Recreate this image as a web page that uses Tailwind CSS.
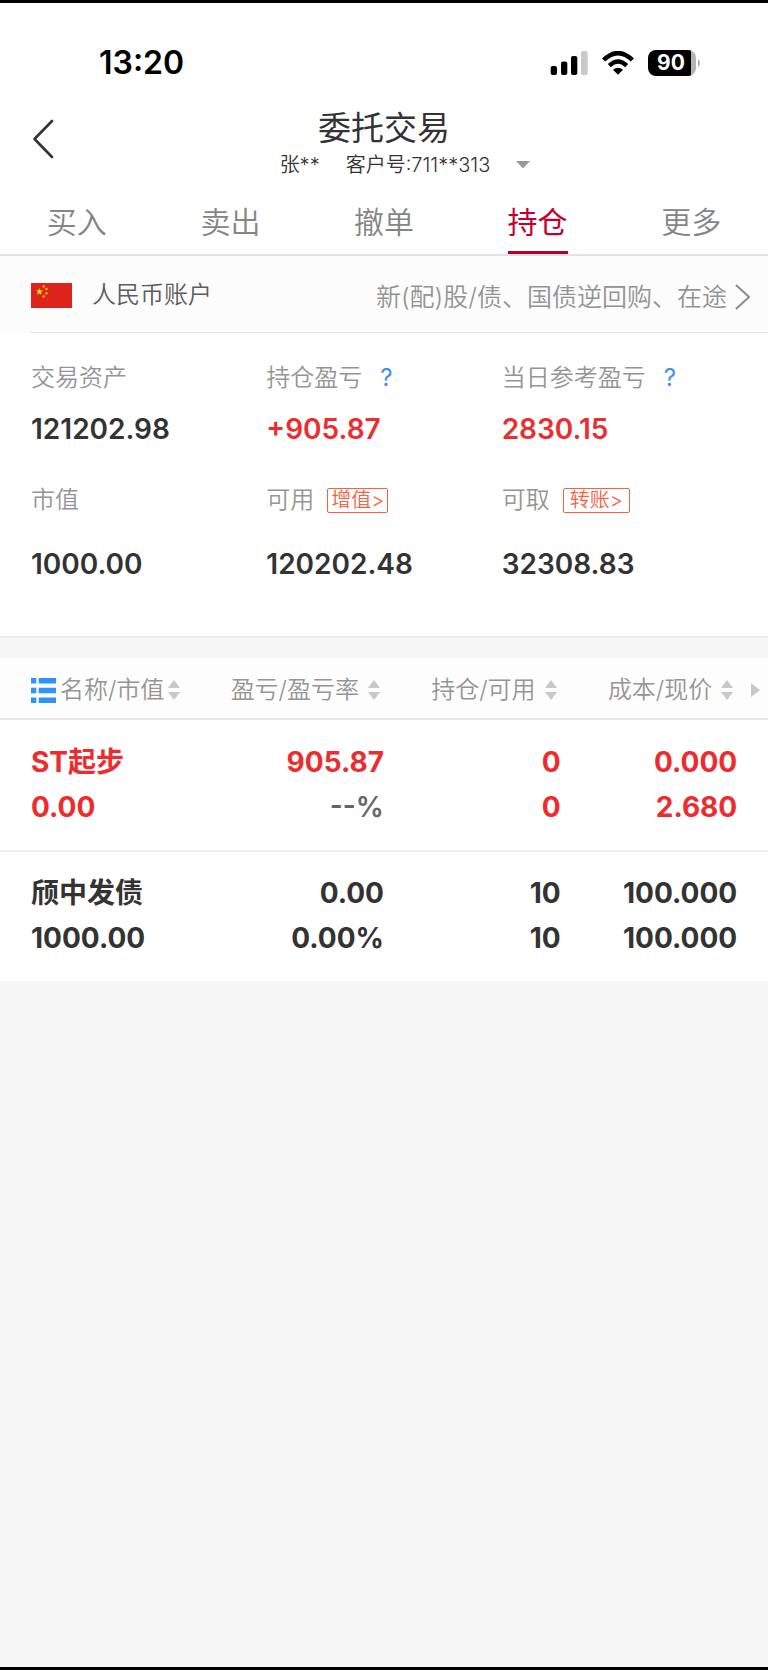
<!DOCTYPE html>
<html lang="zh-CN">
<head>
<meta charset="utf-8">
<meta name="viewport" content="width=device-width, initial-scale=1">
<title>委托交易</title>
<script src="https://cdn.jsdelivr.net/npm/@tailwindcss/browser@4"></script>
</head>
<body class="flex min-h-screen flex-col border-t-3 border-b-3 border-black bg-[#f7f7f7] font-['Inter','Noto_Sans_CJK_SC',sans-serif] text-[#333]">
<svg class="hidden" aria-hidden="true">
  <symbol id="sort" viewBox="0 0 12 20"><path d="M6 0 12 8H0ZM6 20 0 12H12Z" fill="#c8c8c8"/></symbol>
</svg>

<header class="bg-white">
  <div class="flex h-[94px] items-center justify-between pt-[26px] pr-[68px] pl-[99px] text-black">
    <time class="text-[32px] leading-[40px] font-semibold">13:20</time>
    <div class="flex items-center gap-[14px]">
      <svg width="38" height="24" viewBox="0 0 38 24" role="img" aria-label="信号">
        <rect x="0.7" y="15" width="6.3" height="9" rx="2"/><rect x="11" y="10.5" width="6.3" height="13.5" rx="2"/><rect x="21" y="5" width="6.3" height="19" rx="2"/><rect x="31" y="0" width="6.7" height="24" rx="2" fill="#c9c9c9"/>
      </svg>
      <svg width="32" height="24" viewBox="0 0 32 24" role="img" aria-label="无线网络">
        <g fill="none" stroke="#000" stroke-width="4.4"><path d="M1.6 9Q16-4.8 30.4 9"/><path d="M7.3 14.6Q16 6.4 24.7 14.6"/></g>
        <path d="M11 18.7Q16 14.6 21 18.7L16 23.8Z"/>
      </svg>
      <div class="flex items-center">
        <div class="flex h-[26px] w-[48px] items-center justify-center rounded-[8px] bg-linear-to-r from-black from-90% to-[#b4b4b4] to-90% pr-[2px] text-[21px] leading-[26px] font-bold text-white">90</div>
        <svg class="ml-[2px]" width="2" height="8" viewBox="0 0 2 8" aria-hidden="true"><path d="M0 0Q4 4 0 8Z" fill="#aaa"/></svg>
      </div>
    </div>
  </div>
  <div class="grid grid-cols-[64px_1fr_64px] items-start pt-[7px]">
    <a href="#" aria-label="返回" class="flex justify-end pt-[15px] pr-[10px]">
      <svg width="22" height="40" viewBox="0 0 22 40" fill="none" stroke="#333" stroke-width="2.6" stroke-linecap="round" stroke-linejoin="round"><path d="M20 2 2.5 20 20 38"/></svg>
    </a>
    <div class="flex flex-col items-center">
      <h1 class="text-[33px] leading-[48px]">委托交易</h1>
      <button type="button" class="flex items-center pl-[42px] text-[20px] leading-[26px] font-[350] text-[#333]">
        <span>张**</span><span class="ml-[26px]">客户号:711**313</span>
        <svg class="ml-[26px]" width="14" height="8" viewBox="0 0 14 8" aria-hidden="true"><path d="M0 0H14L7 7.5Z" fill="#999"/></svg>
      </button>
    </div>
  </div>
  <nav class="grid h-[78px] grid-cols-5 justify-items-center border-b-2 border-[#e2e2e2] pt-[18px] text-[30px] leading-[52px] font-[350] text-[#858585]">
    <a href="#">买入</a>
    <a href="#">卖出</a>
    <a href="#">撤单</a>
    <a href="#" aria-current="page" class="border-b-3 border-[#b8002c] font-normal text-[#c10031]">持仓</a>
    <a href="#">更多</a>
  </nav>
</header>

<main>
  <section class="border-b-2 border-[#eeeeee] bg-white pb-[52px]">
    <div class="bg-[#fcfcfc] pl-[31px]">
      <div class="flex h-[77px] items-center border-b border-[#e6e6e6] pt-[2px] pr-[18px] text-[24px] leading-[36px]">
        <svg width="41" height="25" viewBox="0 0 41 25" role="img" aria-label="中国国旗">
          <rect width="41" height="25" fill="#dc241c"/>
          <path d="M8.5 5 9.4 7.5H12L10 9.1 10.7 11.8 8.5 10.2 6.2 11.8 7 9.1 5 7.5H7.6Z" fill="#ffec00"/>
          <g fill="#f5bd0a"><circle cx="12.7" cy="3.4" r="1.2"/><circle cx="15.4" cy="6" r="1.2"/><circle cx="15.4" cy="10.3" r="1.2"/><circle cx="12.7" cy="13.4" r="1.2"/></g>
        </svg>
        <h2 class="ml-[20px] font-[350] text-[#5c5c5c]">人民币账户</h2>
        <a href="#" class="ml-auto flex items-center gap-[8px] pt-[4px] text-[25px] font-[350] text-[#939393]">
          <span>新(配)股/债、国债逆回购、在途</span>
          <svg width="15" height="26" viewBox="0 0 15 26" fill="none" stroke="#8c8c8c" stroke-width="2"><path d="M1 1 14 13 1 25"/></svg>
        </a>
      </div>
    </div>
    <dl class="grid grid-cols-3 px-[31px] pt-[27px]">
      <div>
        <dt class="flex h-[36px] items-center text-[24px] leading-[36px] font-[350] text-[#959595]">交易资产</dt>
        <dd class="mt-[13px] text-[28px] leading-[40px] font-semibold">121202.98</dd>
      </div>
      <div>
        <dt class="flex h-[36px] items-center gap-[18px] text-[24px] leading-[36px] font-[350] text-[#959595]">持仓盈亏<button type="button" class="font-normal text-[#3f8df0]" aria-label="持仓盈亏说明">?</button></dt>
        <dd class="mt-[13px] text-[28px] leading-[40px] font-semibold text-[#ec2d2f]">+905.87</dd>
      </div>
      <div>
        <dt class="flex h-[36px] items-center gap-[18px] text-[24px] leading-[36px] font-[350] text-[#959595]">当日参考盈亏<button type="button" class="font-normal text-[#3f8df0]" aria-label="当日参考盈亏说明">?</button></dt>
        <dd class="mt-[13px] text-[28px] leading-[40px] font-semibold text-[#ec2d2f]">2830.15</dd>
      </div>
    </dl>
    <dl class="grid grid-cols-3 px-[31px] pt-[33px]">
      <div>
        <dt class="flex h-[36px] items-center text-[24px] leading-[36px] font-[350] text-[#959595]">市值</dt>
        <dd class="mt-[26px] text-[28px] leading-[40px] font-semibold">1000.00</dd>
      </div>
      <div>
        <dt class="flex h-[36px] items-center gap-[13px] text-[24px] leading-[36px] font-[350] text-[#959595]">可用<button type="button" class="h-[25px] rounded-[2px] border border-[#f4623f] px-[3px] text-[20px] leading-[23px] text-[#f4623f]">增值&gt;</button></dt>
        <dd class="mt-[26px] text-[28px] leading-[40px] font-semibold">120202.48</dd>
      </div>
      <div>
        <dt class="flex h-[36px] items-center gap-[13px] text-[24px] leading-[36px] font-[350] text-[#959595]">可取<button type="button" class="h-[25px] rounded-[2px] border border-[#f4623f] px-[6px] text-[20px] leading-[23px] text-[#f4623f]">转账&gt;</button></dt>
        <dd class="mt-[26px] text-[28px] leading-[40px] font-semibold">32308.83</dd>
      </div>
    </dl>
  </section>

  <table class="mt-[20px] w-full table-fixed border-collapse bg-white">
    <colgroup><col class="w-[27%]"><col class="w-[23%]"><col class="w-[23%]"><col class="w-[23%]"><col class="w-[4%]"></colgroup>
    <thead class="border-b-2 border-[#e6e6e6] bg-[#fdfdfd] text-[24px] leading-[36px] whitespace-nowrap text-[#959595]">
      <tr class="h-[61px]">
        <th scope="col" class="pt-[4px] pl-[31px] font-[350]"><button type="button" class="flex items-center gap-[4px]">
          <svg width="25" height="25" viewBox="0 0 25 25" fill="#2f93fb" aria-hidden="true"><path d="M0 0H5.3V5.5H0ZM7.7 0H25V5.5H7.7ZM0 9.8H5.3V15.3H0ZM7.7 9.8H25V15.3H7.7ZM0 19.5H5.3V25H0ZM7.7 19.5H25V25H7.7Z"/></svg>
          名称/市值<svg width="12" height="20" aria-hidden="true"><use href="#sort"/></svg></button></th>
        <th scope="col" class="pt-[4px] pr-[4px] font-[350]"><button type="button" class="ml-auto flex items-center gap-[9px]">盈亏/盈亏率<svg width="12" height="20" aria-hidden="true"><use href="#sort"/></svg></button></th>
        <th scope="col" class="pt-[4px] pr-[4px] font-[350]"><button type="button" class="ml-auto flex items-center gap-[9px]">持仓/可用<svg width="12" height="20" aria-hidden="true"><use href="#sort"/></svg></button></th>
        <th scope="col" class="pt-[4px] pr-[4px] font-[350]"><button type="button" class="ml-auto flex items-center gap-[9px]">成本/现价<svg width="12" height="20" aria-hidden="true"><use href="#sort"/></svg></button></th>
        <td class="pt-[4px]"><button type="button" class="ml-auto block pr-[8px]" aria-label="更多列"><svg width="9" height="14" viewBox="0 0 9 14"><path d="M0 0 9 7 0 14Z" fill="#c8c8c8"/></svg></button></td>
      </tr>
    </thead>
    <tbody class="text-right text-[28px] leading-[45px] font-bold">
      <tr class="border-b-2 border-[#f0f0f0] text-[#ec2d2f]">
        <td class="py-[20px] pl-[31px] text-left"><div>ST起步</div><div>0.00</div></td>
        <td class="py-[20px]"><div>905.87</div><div class="font-semibold text-[#666]">--%</div></td>
        <td class="py-[20px]"><div>0</div><div>0</div></td>
        <td class="py-[20px]"><div>0.000</div><div>2.680</div></td>
        <td></td>
      </tr>
      <tr>
        <td class="pt-[19px] pb-[20px] pl-[31px] text-left"><div>颀中发债</div><div>1000.00</div></td>
        <td class="pt-[19px] pb-[20px]"><div>0.00</div><div>0.00%</div></td>
        <td class="pt-[19px] pb-[20px]"><div>10</div><div>10</div></td>
        <td class="pt-[19px] pb-[20px]"><div>100.000</div><div>100.000</div></td>
        <td></td>
      </tr>
    </tbody>
  </table>
</main>
</body>
</html>
